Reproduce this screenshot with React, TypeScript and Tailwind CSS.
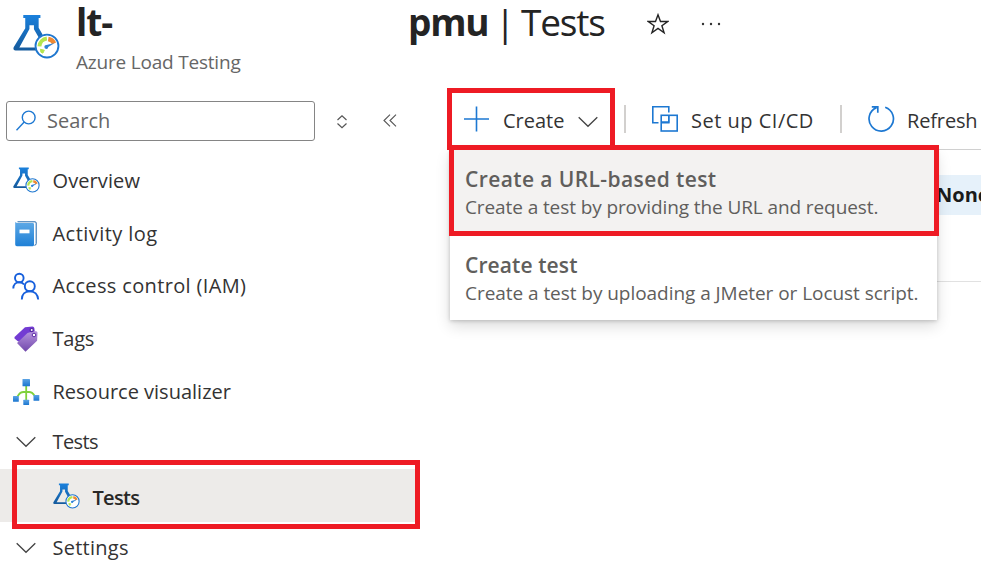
import React from "react";

function LoadTestIcon({ size }: { size: number }) {
  return (
    <svg width={size} height={size} viewBox="0 0 48 48" className="shrink-0">
      <defs>
        <linearGradient id="flask" x1="0" y1="0" x2="0" y2="1">
          <stop offset="0" stopColor="#1a80dc" />
          <stop offset="1" stopColor="#155a9c" />
        </linearGradient>
      </defs>
      <path
        fill="url(#flask)"
        d="M10.500 1h17.500v3.200h-1.800v9.800l4 7-3.200 4.200-5.600-9.700V11.500h-4.600v3.700L6.500 34.200h17l1.500 3H2.500Q-.3 37.200.7 34l11.800-19.500V4.200h-2z"
      />
      <circle cx="34.700" cy="32.700" r="11.700" fill="#fff" stroke="#1f77cf" strokeWidth="1.900" />
      <path d="M26 32a8.700 8.700 0 0 1 7.600-8" stroke="#b4e550" strokeWidth="4" fill="none" transform="translate(1 1)" />
      <path d="M28 36l4 1-1.500 3-2-1z" fill="#b4e550" stroke="#b4e550" />
      <path d="M36 25.500a8 8 0 0 1 6 4.500" stroke="#f08a32" strokeWidth="4.500" fill="none" />
      <path d="M42.500 29.500l-6.500 4.200a2 2 0 1 1-1.800-2z" fill="#2f83d6" />
    </svg>
  );
}

function BookIcon() {
  return (
    <svg width="26" height="26" viewBox="0 0 26 26">
      <defs>
        <linearGradient id="book" x1="0" y1="0" x2="0" y2="1">
          <stop offset="0" stopColor="#5ea9e6" />
          <stop offset="1" stopColor="#1f80d6" />
        </linearGradient>
      </defs>
      <path d="M4.500 .8h17.500q1.200 0 1.200 1.200v20.500q0 1.800-1.800 1.800" fill="#fff" stroke="#2268ab" strokeWidth="1" />
      <path d="M2.200 1.800q0-.8.8-.8l.5 1h16.200q1.300 0 1.300 1.300v20.400q0 1.500-1.500 1.500H3.900q-1.700 0-1.700-1.700z" fill="url(#book)" />
      <rect x="6.500" y="8.600" width="10" height="3.700" fill="#fff" />
    </svg>
  );
}

function PeopleIcon() {
  return (
    <svg width="28" height="28" viewBox="0 0 28 28" fill="none" stroke="#165fdc" strokeWidth="1.900">
      <circle cx="7.300" cy="6" r="4.300" />
      <circle cx="17.800" cy="14.200" r="5" />
      <path d="M1.300 16.500c0-4 2.600-6.300 6-6.300 2 0 3.700.7 4.800 2.300" />
      <path d="M9.800 27.500c0-5 3.200-8.300 8-8.300s8 3.300 8.400 8.300" />
    </svg>
  );
}

function TagIcon() {
  return (
    <svg width="26" height="26" viewBox="0 0 26 26">
      <defs>
        <linearGradient id="tag" x1="0" y1="0" x2="0" y2="1">
          <stop offset="0" stopColor="#b795df" />
          <stop offset="1" stopColor="#7148ab" />
        </linearGradient>
      </defs>
      <path d="M12 1.200L19.500.6q1.500 0 1.800 1.500l.7 5L7 16.200 4.500 15 1.800 12.800q-.9-1 0-2z" fill="#733bd3" />
      <path d="M14.500 7l7-2q3.300.1 3 2.200l-.4 7.500-11.600 11-8.500-8.700z" fill="url(#tag)" />
      <circle cx="18.700" cy="4.100" r="1.600" fill="#fff" stroke="#5325a2" strokeWidth="1.200" />
      <circle cx="21" cy="9" r="1.800" fill="#fff" stroke="#5b2ba6" strokeWidth="1" />
    </svg>
  );
}

function VisualizerIcon() {
  return (
    <svg width="28" height="28" viewBox="0 0 28 28">
      <defs>
        <linearGradient id="node" x1="0" y1="0" x2="0" y2="1">
          <stop offset="0" stopColor="#5ba3e4" />
          <stop offset="1" stopColor="#1a76d0" />
        </linearGradient>
      </defs>
      <path d="M14.200 7v15M4.500 19.500c1.500-.5 2-5.500 7-5.500h5.500c5 0 5.500 5 7 5.500" fill="none" stroke="#7fd13b" strokeWidth="1.800" />
      <rect x="10.500" y="1" width="7.500" height="7.300" rx=".6" fill="url(#node)" />
      <rect x="1" y="18" width="5.800" height="5.800" rx=".5" fill="url(#node)" />
      <rect x="11.300" y="21.800" width="5.800" height="5.200" rx=".5" fill="url(#node)" />
      <rect x="21.500" y="17" width="5.800" height="5.800" rx=".5" fill="url(#node)" />
    </svg>
  );
}

function Chevron() {
  return (
    <svg width="20" height="12" viewBox="0 0 20 12" fill="none" stroke="#444" strokeWidth="1.300" className="shrink-0">
      <path d="M.7 1.200L10 10.300l9.300-9.100" />
    </svg>
  );
}

function NavItem({ icon, label, tracking }: { icon: React.ReactNode; label: string; tracking: string }) {
  return (
    <div className="flex h-[52.700px] items-center pl-3">
      <div className="flex w-[28px] justify-center">{icon}</div>
      <span className={`ml-[12.500px] ${tracking}`}>{label}</span>
    </div>
  );
}

export default function App() {
  return (
    <div className="h-[565px] w-[981px] overflow-hidden whitespace-nowrap bg-white font-['Open_Sans',sans-serif] text-[20px] leading-[28px] text-[#333]">
      <header className="flex h-[88px] pl-[12.500px]">
        <div className="w-[63.500px] pt-[14px]">
          <LoadTestIcon size={47} />
        </div>
        <div>
          <div className="flex h-[48px] items-center text-[37px] leading-[44px] text-[#242424]">
            <span className="w-[332px] self-start font-bold tracking-[-1px]">lt-</span>
            <span className="w-[87px] self-start font-bold tracking-[-1.200px]">pmu</span>
            <span className="w-[26px] self-start">|</span>
            <span className="w-[126px] self-start tracking-[-1.200px]">Tests</span>
            <svg width="22" height="22" viewBox="0 0 22 22" fill="none" stroke="#242424" strokeWidth="1.400">
              <path d="M11 1.800l2.500 6.700h7.200l-5.800 4.200 2.200 7.100-6.100-4.400-6.100 4.400 2.200-7.100L1.300 8.500h7.200z" />
            </svg>
            <svg width="20" height="4" viewBox="0 0 20 4" fill="#333" className="ml-[32px]">
              <circle cx="2" cy="2" r="1.200" />
              <circle cx="10" cy="2" r="1.200" />
              <circle cx="18" cy="2" r="1.200" />
            </svg>
          </div>
          <div className="text-[19px] tracking-[-0.200px] text-[#666]">Azure Load Testing</div>
        </div>
      </header>
      <div className="flex">
        <aside className="w-[447px]">
          <div className="flex h-[66.500px] items-start pl-[6px] pt-[13px]">
            <div className="flex h-[40px] w-[309px] items-center rounded-[3px] border border-[#858585] pl-[9px]">
              <svg width="22" height="22" viewBox="0 0 22 22" fill="none" stroke="#1d78d2" strokeWidth="1.400">
                <circle cx="12.700" cy="7.500" r="6.400" />
                <path d="M8.200 12L.5 20.300" />
              </svg>
              <span className="ml-[9px] text-[#666]">Search</span>
            </div>
            <svg width="12" height="14" viewBox="0 0 12 14" fill="none" stroke="#555" strokeWidth="1.200" className="ml-[20.500px] mt-[13.500px]">
              <path d="M1.500 5L6 .8 10.500 5M1.500 8.500L6 12.700l4.500-4.200" />
            </svg>
            <svg width="14" height="13" viewBox="0 0 14 13" fill="none" stroke="#555" strokeWidth="1.100" className="ml-[35.500px] mt-[13px]">
              <path d="M7 .7L1 6.500l6 5.800M13 .7L7 6.500l6 5.800" />
            </svg>
          </div>
          <NavItem icon={<LoadTestIcon size={27} />} label="Overview" tracking="tracking-[0.100px]" />
          <NavItem icon={<BookIcon />} label="Activity log" tracking="tracking-[0.450px]" />
          <NavItem icon={<PeopleIcon />} label="Access control (IAM)" tracking="tracking-[0.350px]" />
          <NavItem icon={<TagIcon />} label="Tags" tracking="tracking-[-0.250px]" />
          <NavItem icon={<VisualizerIcon />} label="Resource visualizer" tracking="tracking-normal" />
          <div className="flex h-[51px] items-center pb-[3px] pl-4">
            <Chevron />
            <span className="ml-[16.500px] tracking-[-0.600px]">Tests</span>
          </div>
          <div className="relative flex h-[53px] w-[415px] items-center bg-[#edebe9] pl-[53px] pt-[3px]">
            <LoadTestIcon size={27} />
            <span className="ml-[12.500px] pt-[2px] font-semibold tracking-[-0.700px] text-[#292827]">Tests</span>
            <div className="absolute -top-[9px] left-[12px] h-[69px] w-[408px] border-5 border-[#ee1b24] shadow-[inset_0_4px_0_#fff,inset_0_-2px_0_#fff]" />
          </div>
          <div className="flex h-[52px] items-center pl-4">
            <Chevron />
            <span className="ml-[16.500px] tracking-[0.250px]">Settings</span>
          </div>
        </aside>
        <main className="relative w-[534px]">
          <div className="flex h-[62px] items-center border-b border-[#d0d0d0]">
            <div className="flex h-[62px] w-[168px] shrink-0 items-center border-5 border-[#ee1b24] pl-[11px]">
              <svg width="27" height="26" viewBox="0 0 27 26" stroke="#1d78d2" strokeWidth="1.600">
                <path d="M13.500 .5v25M1 13h25" />
              </svg>
              <span className="ml-[13px] w-[75px] pt-[4px]">Create</span>
              <div className="pt-[7px]">
                <Chevron />
              </div>
            </div>
            <div className="ml-[9px] h-[28px] w-[2px] bg-[#d2d0ce]" />
            <svg width="28" height="28" viewBox="0 0 28 28" fill="none" className="ml-[25px]">
              <path d="M7.500 17.700H1.800V1.800h16v5.700M17.800 11v6.700H11" stroke="#1d78d2" strokeWidth="1.600" />
              <rect x="10.200" y="10.300" width="16" height="15.700" stroke="#1d78d2" strokeWidth="1.600" />
              <path d="M10.800 17h7V11" stroke="#1d78d2" strokeWidth="1.300" />
            </svg>
            <span className="ml-[12px] w-[149px] pt-[4px] tracking-[0.500px]">Set up CI/CD</span>
            <div className="h-[28px] w-[2px] shrink-0 bg-[#d2d0ce]" />
            <svg width="28" height="28" viewBox="0 0 28 28" fill="none" stroke="#1d78d2" strokeWidth="1.700" className="ml-[25px] shrink-0">
              <path d="M18.200 2.300A12.200 12.200 0 1 1 9.500 2.600M4.800 1.800h6v6" />
            </svg>
            <span className="ml-[12px] pt-[4px] tracking-[-0.150px]">Refresh</span>
          </div>
          <div className="ml-[3px] flex h-[132px] items-start justify-end border-b border-[#e1e1e1] pt-[25px]">
            <div className="h-[40px] w-[46px] bg-[#e6f1fa] pl-px pt-[6px] font-bold text-[#1b1b1b]">None</div>
          </div>
          <div className="absolute left-[3px] top-[62px] h-[170px] w-[487px] bg-white text-[#605e5c] shadow-[0_6px_14px_rgba(0,0,0,0.14),0_1px_4px_rgba(0,0,0,0.2)]">
            <div className="relative h-[86px] bg-[#f3f2f1] pl-[15px] pt-[15px]">
              <div className="text-[21px] font-semibold tracking-[0.400px]">Create a URL-based test</div>
              <div className="text-[19px] tracking-[-0.100px]">Create a test by providing the URL and request.</div>
              <div className="absolute -left-px -top-[5px] h-[91px] w-[490px] border-5 border-[#ee1b24]" />
            </div>
            <div className="pl-[15px] pt-[15px]">
              <div className="text-[21px] font-semibold tracking-[0.100px]">Create test</div>
              <div className="text-[19px] tracking-[-0.050px]">Create a test by uploading a JMeter or Locust script.</div>
            </div>
          </div>
        </main>
      </div>
    </div>
  );
}
